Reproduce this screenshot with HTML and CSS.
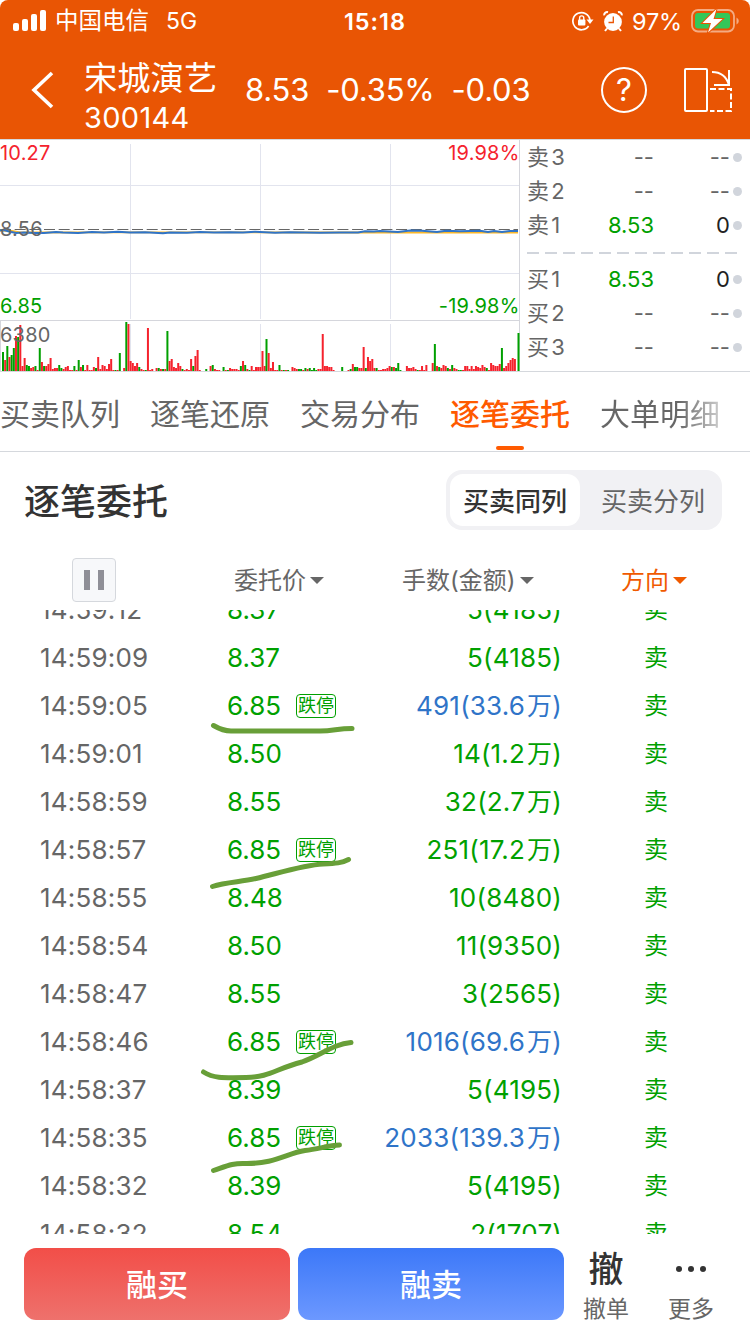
FILE: index.html
```
<!DOCTYPE html>
<html lang="zh-CN">
	<head>
		<meta charset="UTF-8">
		<meta name="viewport" content="width=750">
		<title>宋城演艺 300144</title>
		<link rel="stylesheet" href="styles.css">
	</head>
	<body>
		<header class="header">
			<div class="statusbar">
				<div class="status_left">
					<svg width="34" height="22" viewBox="0 0 34 22" fill="#fff"><rect x="0" y="13" width="6" height="8" rx="2"/><rect x="9" y="9" width="6" height="12" rx="2"/><rect x="18" y="4" width="6" height="17" rx="2"/><rect x="27" y="0" width="6" height="21" rx="2"/></svg>
					<span class="carrier">中国电信</span>
					<span class="network">5G</span>
				</div>
				<div class="clock">15:18</div>
				<div class="status_right">
					<svg class="lock" width="22" height="20" viewBox="0 0 22 20" fill="none" stroke="#fff" stroke-width="1.7"><path d="M16.6 15A8.6 8.6 0 1 1 18 9"/><path d="M14.5 8.5h7L18 13z" fill="#fff" stroke="none"/><rect x="6" y="8.5" width="7.4" height="6" rx="1" fill="#fff" stroke="none"/><path d="M7.6 9V7a2.1 2.1 0 0 1 4.2 0v2" stroke-width="1.4"/></svg>
					<svg class="alarm" width="20" height="21" viewBox="0 0 20 21"><circle cx="10" cy="11" r="8.9" fill="#fff"/><path d="M1.200 4.400A3 3 0 0 1 5 1.200M15 1.200a3 3 0 0 1 3.800 3.200M4 17.5l-2 2.5M16 17.5l2 2.5" fill="none" stroke="#fff" stroke-width="2"/><path d="M10.3 5.5V11.500H5.500" fill="none" stroke="#e95504" stroke-width="1.3"/></svg>
					<span class="percent">97%</span>
					<svg class="battery" width="48" height="24" viewBox="0 0 48 24"><rect x="1" y="1" width="42" height="21.500" rx="6" fill="none" stroke="#f4ab83" stroke-width="1.8"/><path d="M45.500 8.500v7q2.300-1 2.300-3.500t-2.300-3.500z" fill="#f4ab83"/><rect x="4" y="4" width="35" height="15.500" rx="3" fill="#34c759"/><path d="M25.500 0L11.500 14H20l-3 9.500L31.500 10H22.500z" fill="#fff" stroke="#e95504" stroke-width="2" paint-order="stroke"/></svg>
				</div>
			</div>
			<div class="titlebar">
				<svg class="back" width="24" height="40" viewBox="0 0 24 40"><path d="M21 3L3 20l18 17" fill="none" stroke="#fff" stroke-width="3.6"/></svg>
				<div class="stock">
					<h1>宋城演艺</h1>
					<p>300144</p>
				</div>
				<div class="quote"><span>8.53</span><span>-0.35%</span><span>-0.03</span></div>
				<div class="help">?</div>
				<svg class="rotate" width="50" height="46" viewBox="0 0 50 46" fill="none" stroke="#fff" stroke-width="2"><rect x="2" y="2" width="22" height="42" rx="1"/><path d="M29 5q13 0 17 13M46 3v15H31"/><path d="M27 22h21v22H27" stroke-dasharray="6 2.500"/></svg>
			</div>
		</header>

		<section class="market">
			<svg class="chart" width="520" height="232" viewBox="0 0 520 232">
				<g class="grid">
					<path d="M130.500 4V179M260.500 4V179M390.500 4V179M0 45.500H519M0 133.500H519M130.500 184V231M260.500 184V231M390.500 184V231"/>
					<path class="frame" d="M0 180.500H519M519.500 0V231M.5 181V231"/>
				</g>
				<path class="zero" d="M0 89.500H518"/>
				<g id="volume"></g>
				<path class="average" d="M0 90.500L12 91 20 92.500 120 92.300 300 92.500 518 92.500"/>
				<path class="price" d="M0 90.500L4 90 9 91.500 16 93 24 92.500 35 93 44 93 56 92 63 92.500 78 93 92 92 104 92.500 118 91.700 130 92.500 145 92.200 163 93.300 170 92.500 187 92.700 200 92 214 92.600 230 92.200 243 92.600 255 91.800 275 92.700 290 92.300 320 92.700 340 92.500 358 92.500 365 91.300 374 91.500 380 91 398 92 410 90.500 422 90.700 437 92 446 90.700 460 91.300 480 90.800 488 92 494 91 502 92 510 91 518 91"/>
				<text x="0" y="20" class="up">10.27</text>
				<text x="0" y="96">8.56</text>
				<text x="0" y="173" class="down">6.85</text>
				<text x="519.500" y="20" class="up right">19.98%</text>
				<text x="519.500" y="173" class="down right">-19.98%</text>
				<text x="0" y="202">6380</text>
			</svg>
			<div class="depth">
				<div class="level"><span>卖 3</span><span class="p">--</span><span class="v">--</span><i></i></div>
				<div class="level"><span>卖 2</span><span class="p">--</span><span class="v">--</span><i></i></div>
				<div class="level"><span>卖 1</span><span class="p down">8.53</span><span class="v dark">0</span><i></i></div>
				<svg class="split" width="210" height="2" viewBox="0 0 210 2"><path d="M0 1H210" stroke="#d1d5dc" stroke-width="2" stroke-dasharray="12 6"/></svg>
				<div class="level"><span>买 1</span><span class="p down">8.53</span><span class="v dark">0</span><i></i></div>
				<div class="level"><span>买 2</span><span class="p">--</span><span class="v">--</span><i></i></div>
				<div class="level"><span>买 3</span><span class="p">--</span><span class="v">--</span><i></i></div>
			</div>
		</section>

		<nav class="tabs">
			<a>买卖队列</a>
			<a>逐笔还原</a>
			<a>交易分布</a>
			<a class="active">逐笔委托</a>
			<a class="fade">大单明细</a>
		</nav>

		<div class="heading">
			<h2>逐笔委托</h2>
			<div class="switch"><span class="on">买卖同列</span><span>买卖分列</span></div>
		</div>

		<div class="columns">
			<div class="pause"><b></b><b></b></div>
			<span class="col_price">委托价<i></i></span>
			<span class="col_amount">手数(金额)<i></i></span>
			<span class="col_side">方向<i></i></span>
		</div>

		<main class="orders">
			<div class="list">
				<div class="row"><time>14:59:12</time><span class="price">8.37</span><span class="amount">5(4185)</span><span class="side">卖</span></div>
				<div class="row"><time>14:59:09</time><span class="price">8.37</span><span class="amount">5(4185)</span><span class="side">卖</span></div>
				<div class="row"><time>14:59:05</time><span class="price">6.85<em>跌停</em></span><span class="amount big">491(33.6<u>万</u>)</span><span class="side">卖</span></div>
				<div class="row"><time>14:59:01</time><span class="price">8.50</span><span class="amount">14(1.2<u>万</u>)</span><span class="side">卖</span></div>
				<div class="row"><time>14:58:59</time><span class="price">8.55</span><span class="amount">32(2.7<u>万</u>)</span><span class="side">卖</span></div>
				<div class="row"><time>14:58:57</time><span class="price">6.85<em>跌停</em></span><span class="amount">251(17.2<u>万</u>)</span><span class="side">卖</span></div>
				<div class="row"><time>14:58:55</time><span class="price">8.48</span><span class="amount">10(8480)</span><span class="side">卖</span></div>
				<div class="row"><time>14:58:54</time><span class="price">8.50</span><span class="amount">11(9350)</span><span class="side">卖</span></div>
				<div class="row"><time>14:58:47</time><span class="price">8.55</span><span class="amount">3(2565)</span><span class="side">卖</span></div>
				<div class="row"><time>14:58:46</time><span class="price">6.85<em>跌停</em></span><span class="amount big">1016(69.6<u>万</u>)</span><span class="side">卖</span></div>
				<div class="row"><time>14:58:37</time><span class="price">8.39</span><span class="amount">5(4195)</span><span class="side">卖</span></div>
				<div class="row"><time>14:58:35</time><span class="price">6.85<em>跌停</em></span><span class="amount big">2033(139.3<u>万</u>)</span><span class="side">卖</span></div>
				<div class="row"><time>14:58:32</time><span class="price">8.39</span><span class="amount">5(4195)</span><span class="side">卖</span></div>
				<div class="row"><time>14:58:32</time><span class="price">8.54</span><span class="amount">2(1707)</span><span class="side">卖</span></div>
			</div>
			<!-- marker strokes under the limit-down orders -->
			<svg class="marks" width="750" height="624" viewBox="0 610 750 624">
				<path d="M213.500 725.500Q223 731 231 731H320C334 731 337 728.500 352 728.500"/>
				<path d="M212.500 886.500C226 882 241 882 256 878.500C279 873 304 865 323 864C336 863.500 342 863 348.500 859.500"/>
				<path d="M203.500 1072C213 1078 221 1078 246 1077.500C270 1077 275 1069 302 1062C320 1056 333 1044 351 1042.500"/>
				<path d="M213.500 1170.500C227 1166 233 1163 245 1163.500C275 1164 287 1153 305 1150.500C319 1149 328 1145.500 339.500 1145"/>
			</svg>
		</main>

		<footer class="actions">
			<button class="buy">融买</button>
			<button class="sell">融卖</button>
			<div class="action"><b>撤</b><span>撤单</span></div>
			<div class="action more"><b><i></i><i></i><i></i></b><span>更多</span></div>
		</footer>
		<script src="volume.js"></script>
	</body>
</html>
```

FILE: styles.css
```
*{
	box-sizing: border-box;
}
html, body{
	margin: 0;
	height: 1334px;
	overflow: hidden;
	background-color: #fff;
	font-family: Inter, "Noto Sans CJK SC", sans-serif;
	color: #666;
}
h1, h2, p{
	margin: 0;
	font-weight: normal;
}
i, em{
	font-style: normal;
}
svg{
	display: block;
	flex: none;
}
.header{
	height: 139px;
	background-color: #e95504;
	border-radius: 8px 8px 0 0;
	color: #fff;
}
.statusbar{
	height: 40px;
	display: grid;
	grid-template-columns: 1fr auto 1fr;
	align-items: center;
	font-size: 23px;
}
.status_left{
	display: flex;
	align-items: center;
	padding-left: 13px;
}
.carrier{
	margin-left: 8px;
	font-size: 23.5px;
	line-height: 42px;
}
.network{
	margin: 0 0 0 17px;
}
.clock{
	font-weight: 600;
	font-size: 23.5px;
	letter-spacing: 1px;
}
.status_right{
	display: flex;
	align-items: center;
	justify-content: flex-end;
	padding-right: 11px;
}
.alarm{
	margin-left: 9px;
}
.percent{
	margin: 0 9px 0 9px;
	font-size: 23.5px;
	letter-spacing: -0.2px;
}
.titlebar{
	height: 99px;
	display: flex;
	align-items: center;
	padding: 0 15px 0 31px;
}
.back{
	margin-top: 1px;
}
.stock{
	width: 161px;
	margin-left: 29px;
	padding-top: 17px;
}
.stock h1{
	font-size: 33.3px;
	line-height: 40px;
	font-weight: 400;
}
.stock p{
	font-size: 29px;
	line-height: 40px;
	letter-spacing: 0.3px;
}
.quote{
	display: flex;
	gap: 17px;
	width: 356px;
	font-size: 31px;
	line-height: 40px;
	letter-spacing: -0.2px;
	margin-top: 1px;
}
.help{
	width: 46px;
	height: 46px;
	border: 2px solid #fff;
	border-radius: 50%;
	text-align: center;
	font-size: 31px;
	line-height: 42px;
	margin-top: 1px;
}
.rotate{
	margin: 1px 0 0 36px;
}
.market{
	display: flex;
	height: 233px;
	border-top: 1px solid #d5d8dd;
	border-bottom: 1px solid #d5d8dd;
}
.chart text{
	font-size: 20px;
	fill: #666;
	letter-spacing: 0.2px;
}
.chart text.up{
	fill: #f5222d;
}
.chart text.down{
	fill: #00a000;
}
.chart text.right{
	text-anchor: end;
}
.grid path{
	fill: none;
	stroke: #e2e4ee;
}
.grid .frame{
	stroke: #d5d6dc;
}
.zero{
	stroke: #666;
	stroke-width: 1;
	stroke-dasharray: 11 3.67;
}
.average{
	fill: none;
	stroke: #fbb829;
	stroke-width: 1.8;
}
.chart .price{
	fill: none;
	stroke: #2f74c8;
	stroke-width: 2;
}
.depth{
	flex: 1;
	padding: 0 8px 0 7px;
	font-size: 22px;
}
.level{
	display: grid;
	grid-template-columns: 60px 67px 76px 12px;
	height: 34px;
	line-height: 35px;
	align-items: center;
	white-space: nowrap;
	word-spacing: -4px;
}
.level .p, .level .v{
	text-align: right;
}
.level i{
	width: 9px;
	height: 9px;
	margin-left: 3px;
	border-radius: 50%;
	background-color: #d1d5dc;
}
.level .dark{
	color: #222;
}
.level .down{
	color: #00a000;
}
.split{
	margin: 10px 0 8px;
}
.tabs{
	display: flex;
	gap: 30px;
	height: 80px;
	border-bottom: 1px solid #d5d8dd;
	font-size: 30px;
	line-height: 84px;
	white-space: nowrap;
}
.tabs a{
	position: relative;
	flex: none;
	height: 79px;
}
.tabs .active{
	color: #ff5a00;
	font-weight: 500;
}
.tabs .active::after{
	content: "";
	position: absolute;
	left: 46px;
	bottom: 1px;
	width: 28px;
	height: 4px;
	border-radius: 2px;
	background-color: #ff5a00;
}
.tabs .fade{
	color: transparent;
	background: linear-gradient(90deg, #666 65%, #ccc 100%);
	background-clip: text;
	-webkit-background-clip: text;
}
.heading{
	display: flex;
	align-items: center;
	justify-content: space-between;
	height: 96px;
	padding: 0 28px 0 24px;
}
.heading h2{
	font-size: 36px;
	line-height: 50px;
	margin-top: 3px;
	font-weight: 500;
	color: #333;
}
.switch{
	display: flex;
	width: 276px;
	height: 60px;
	padding: 4px;
	border-radius: 16px;
	background-color: #f1f1f4;
	font-size: 26px;
	line-height: 55px;
	text-align: center;
}
.switch span{
	flex: none;
	width: 138px;
	padding-left: 8px;
}
.switch .on{
	width: 130px;
	height: 52px;
	border-radius: 13px;
	background-color: #fff;
	color: #333;
	font-weight: 500;
	padding: 0;
}
.columns{
	display: grid;
	grid-template-columns: 234px 168px 219px 1fr;
	align-items: center;
	height: 62px;
	font-size: 24px;
}
.columns span{
	margin-bottom: 2px;
}
.columns i{
	display: inline-block;
	margin-left: 4px;
	border: 7px solid transparent;
	border-top-color: currentColor;
	border-bottom: 0;
	vertical-align: 5px;
}
.col_side{
	color: #f05a00;
}
.pause{
	display: flex;
	justify-content: center;
	gap: 8px;
	width: 44px;
	height: 44px;
	margin: 2px 0 0 72px;
	padding-top: 11px;
	border: 1px solid #d5d8dd;
	border-radius: 4px;
	background-color: #f7f8fa;
}
.pause b{
	width: 6px;
	height: 20px;
	background-color: #8f8f97;
}
.orders{
	position: relative;
	height: 624px;
	overflow: hidden;
	font-size: 26px;
}
.list{
	margin-top: -24px;
}
.row{
	display: grid;
	grid-template-columns: 187px 140px 195px 1fr;
	height: 48px;
	line-height: 48px;
	padding-left: 40px;
	color: #00a000;
	white-space: nowrap;
}
.row time{
	color: #666;
	letter-spacing: 0.2px;
}
.row em{
	display: inline-block;
	margin-left: 15px;
	width: 40px;
	height: 24px;
	border: 1px solid #00a000;
	border-radius: 4px;
	font-size: 18px;
	line-height: 21px;
	text-align: center;
	vertical-align: 3px;
}
.row .amount{
	text-align: right;
	letter-spacing: 0.2px;
}
.row u{
	margin-left: 2px;
	font-size: 25px;
	text-decoration: none;
}
.row .big{
	color: #2f74c8;
}
.row .side{
	padding-left: 82px;
	font-size: 24px;
}
.marks{
	position: absolute;
	left: 0;
	top: 0;
	fill: none;
	stroke: #689f38;
	stroke-width: 5;
	stroke-linecap: round;
}
.actions{
	display: flex;
	padding: 14px 0 0 24px;
	height: 100px;
}
.actions button{
	width: 266px;
	height: 72px;
	margin: 0 8px 0 0;
	padding: 0 0 3px;
	border: none;
	border-radius: 12px;
	color: #fff;
	font: 500 31px Inter, "Noto Sans CJK SC", sans-serif;
}
.buy{
	background: linear-gradient(#f24e48, #ee716c);
}
.sell{
	background: linear-gradient(#3c78f8, #6c98ff);
}
.action{
	display: flex;
	flex-direction: column;
	align-items: center;
	width: 68px;
	font-size: 23px;
}
.action b{
	height: 40px;
	font-size: 35px;
	line-height: 42px;
	font-weight: 500;
	color: #333;
}
.action span{
	line-height: 42px;
}
.more{
	margin-left: 17px;
}
.more b{
	display: flex;
	align-items: center;
	gap: 6px;
	padding-top: 2px;
}
.more b i{
	width: 6px;
	height: 6px;
	border-radius: 50%;
	background-color: #333;
}
```

FILE: volume.js
```
// minute volumes: start x, then r/g + bar height
var segments = [
	[3, "g19 r11 g25 r14 g16 g23 r35 g34 r46 r5 r13 g6 g5 r3 r4 g5 r1 g23 r9 g5 r5 r7 r13 r2 r3 r3 g6 g3 r2 r4 r5 r1 r1 g5 r1 g11 r4 g6 r1 r6 r1"],
	[91.700, "r1 r4 g3 r14 r2 r6 r5 r2 r7 r12 r1 g1 r1 g18 r0 r3 g49 r47 r10 r8 r5 r8 g4 r2 r1 g1 r43 r1 r2 r0 r3 g3 r2 g2 r2 g40 r10 r12 r4 r3 r8"],
	[180.300, "r5 g2 r1 r2 r1 r12 g5 r15 r21 r1 r0 r0 g2 r0 r5 g6 r2 r1 r1 r0 g4 r1 g1 r3 r2 r2 r2 r1 g5 r10 g6 r2 g1 r5 r1 r4 r4 r4 r20 r5"],
	[266.500, "g32 r18 r3 r9 r1 r1 g6 r1 g1 r1 g1 r0 r4 r3 r2 g2 g2 r1 g3 r2 g3 g1 g3 g1 r2 r2 r37 r5 r5 r4 r4 r1 r0 r0 r0 g4 r0 r0"],
	[348.500, "r1 g2 r7 g4 g4 r3 r3 r24 g3 r14 r10 r12 r3 g3 r1 r1 r2 r2 r3 r5 g4 r4 g3 g8 g1 r0 r0 r5 r3 r3 r4 r2 g1 r1 r5 r1 r6 r0 r0"],
	[432.700, "r8 g27 r5 g4 r3 r6 r5 g3 r2 g6 r3 r2 g1 g1 r1 r5 r5 r2 r5 r2 r5 r4 r3 r6 r4 g3 r1 r8 r6 r5 r5 r7 g23 r3 r5 r8 r11 r13 r12"],
	[518.500, "g38"]
];
var volume = document.getElementById("volume");
segments.forEach(function(segment){
	segment[1].split(" ").forEach(function(bar, i){
		var h = Number(bar.slice(1));
		var rect = document.createElementNS("http://www.w3.org/2000/svg", "rect");
		rect.setAttribute("x", segment[0] + i * 2.163 - 1);
		rect.setAttribute("y", 231 - h);
		rect.setAttribute("width", 2);
		rect.setAttribute("height", h);
		rect.setAttribute("fill", bar[0] == "g" ? "#00a000" : "#f5222d");
		volume.appendChild(rect);
	});
});
```
